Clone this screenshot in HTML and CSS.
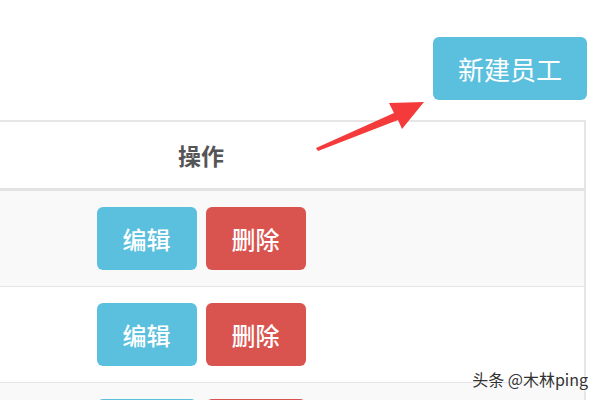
FILE: index.html
```html
<!DOCTYPE html>
<html lang="zh">
<head>
<meta charset="utf-8">
<link rel="stylesheet" href="styles.css">
</head>
<body>
<div class="page">
  <div class="toolbar">
    <button class="btn btn-info btn-new">新建员工</button>
  </div>
  <div class="table-wrap">
    <table class="table">
      <thead>
        <tr><th>操作</th></tr>
      </thead>
      <tbody>
        <tr class="odd"><td><button class="btn btn-info btn-sm">编辑</button><button class="btn btn-danger btn-sm">删除</button></td></tr>
        <tr><td><button class="btn btn-info btn-sm">编辑</button><button class="btn btn-danger btn-sm">删除</button></td></tr>
        <tr class="odd"><td><button class="btn btn-info btn-sm">编辑</button><button class="btn btn-danger btn-sm">删除</button></td></tr>
      </tbody>
    </table>
  </div>
  <svg class="arrow" width="600" height="400" viewBox="0 0 600 400">
    <polygon points="316,148 394,113 389,103 424,102 402,129 398,120 318,151" fill="#f43a3a"/>
  </svg>
  <div class="watermark">头条 @木林ping</div>
</div>
</body>
</html>
```
FILE: styles.css
```css
html, body {
  margin: 0;
  padding: 0;
  background: #ffffff;
}
body {
  font-family: "Noto Sans CJK SC", "Noto Sans", sans-serif;
  width: 600px;
  height: 400px;
  overflow: hidden;
}
.page {
  position: relative;
  width: 600px;
  height: 400px;
  overflow: hidden;
}
.toolbar {
  display: flex;
  justify-content: flex-end;
  padding: 37px 13px 0 0;
}
.btn {
  border: none;
  color: #ffffff;
  font-family: "Noto Sans CJK SC", "Noto Sans", sans-serif;
  cursor: pointer;
  padding: 0;
}
.btn-info {
  background: #5bc0de;
}
.btn-danger {
  background: #d9534f;
}
.btn-new {
  width: 154px;
  height: 63px;
  font-size: 26px;
  line-height: 63px;
  border-radius: 6px;
}
.table-wrap {
  margin-top: 20px;
  width: 600px;
  overflow: hidden;
}
.table {
  border-collapse: collapse;
  margin-left: -182px;
  width: 768px;
  border-top: 2px solid #e6e6e6;
  border-right: 2px solid #e6e6e6;
}
.table th {
  height: 66px;
  padding: 0;
  font-size: 23px;
  font-weight: bold;
  color: #555555;
  text-align: center;
  border-bottom: 3px solid #e3e3e3;
}
.table td {
  padding: 16px 0 16px 0;
  text-align: center;
  border-bottom: 1px solid #e6e6e6;
  height: 63px;
}
.table tr.odd td {
  background: #f9f9f9;
}
.btn-sm {
  width: 100px;
  height: 63px;
  font-size: 24px;
  font-weight: 500;
  line-height: 63px;
  border-radius: 6px;
  margin: 0 4.5px;
  vertical-align: top;
}
.arrow {
  position: absolute;
  left: 0;
  top: 0;
  pointer-events: none;
}
.watermark {
  position: absolute;
  right: 12px;
  bottom: 9px;
  font-size: 16px;
  color: #333333;
  text-shadow: 0 0 2px #ffffff, 0 0 2px #ffffff;
  font-family: "Noto Sans CJK SC", "Noto Sans", sans-serif;
}
```
